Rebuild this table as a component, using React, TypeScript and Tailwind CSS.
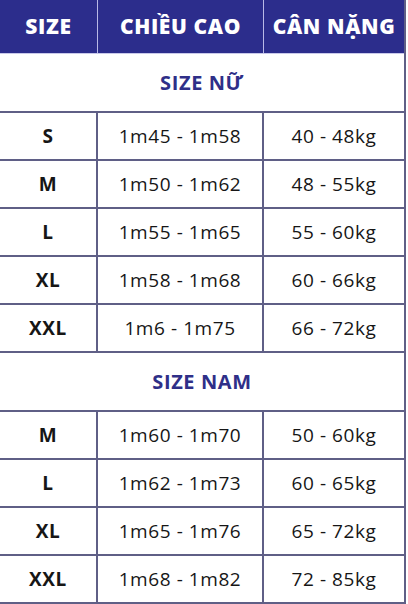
import React from "react";

type Row = { size: string; height: string; weight: string };

const female: Row[] = [
  { size: "S", height: "1m45 - 1m58", weight: "40 - 48kg" },
  { size: "M", height: "1m50 - 1m62", weight: "48 - 55kg" },
  { size: "L", height: "1m55 - 1m65", weight: "55 - 60kg" },
  { size: "XL", height: "1m58 - 1m68", weight: "60 - 66kg" },
  { size: "XXL", height: "1m6 - 1m75", weight: "66 - 72kg" },
];

const male: Row[] = [
  { size: "M", height: "1m60 - 1m70", weight: "50 - 60kg" },
  { size: "L", height: "1m62 - 1m73", weight: "60 - 65kg" },
  { size: "XL", height: "1m65 - 1m76", weight: "65 - 72kg" },
  { size: "XXL", height: "1m68 - 1m82", weight: "72 - 85kg" },
];

const cols = "grid grid-cols-[98px_166px_1fr]";

function Section({ title }: { title: string }) {
  return (
    <div className="h-[59px] flex items-center justify-center border-b-2 border-[#5f5f86] text-[20px] tracking-[0.03em] font-bold text-[#2f2f88]">
      {title}
    </div>
  );
}

function DataRow({ row }: { row: Row }) {
  return (
    <div className={`${cols} h-[48px] border-b-2 border-[#5f5f86] text-[19px] tracking-[0.03em] text-[#161616]`}>
      <div className="flex items-center justify-center font-bold border-r-2 border-[#5f5f86]">{row.size}</div>
      <div className="flex items-center justify-center font-medium border-r-2 border-[#5f5f86]">{row.height}</div>
      <div className="flex items-center justify-center font-medium">{row.weight}</div>
    </div>
  );
}

export default function App() {
  return (
    <div className="w-[408px] h-[604px] overflow-hidden bg-white" style={{ fontFamily: '"Open Sans", "Noto Sans", sans-serif' }}>
      <div className="w-[406px] border-r-2 border-[#5f5f86]">
        <div className={`${cols} h-[54px] bg-[#2c2d8c] text-white text-[21px] tracking-[0.03em] font-extrabold border-b border-[#c9c9ea]`}>
          <div className="flex items-center justify-center border-r border-[#b9b9e6]">SIZE</div>
          <div className="flex items-center justify-center border-r border-[#b9b9e6]">CHIỀU CAO</div>
          <div className="flex items-center justify-center">CÂN NẶNG</div>
        </div>
        <Section title="SIZE NỮ" />
        {female.map((r) => (
          <DataRow key={"f" + r.size} row={r} />
        ))}
        <Section title="SIZE NAM" />
        {male.map((r) => (
          <DataRow key={"m" + r.size} row={r} />
        ))}
      </div>
    </div>
  );
}
